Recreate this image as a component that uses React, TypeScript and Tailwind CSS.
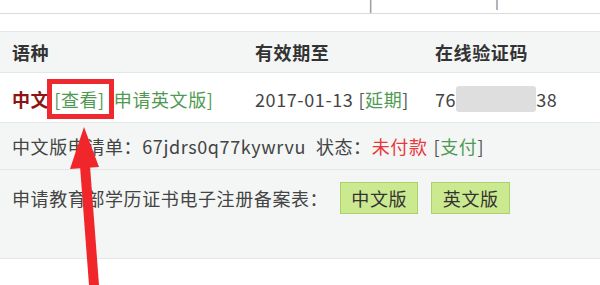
const font = { fontFamily: '"Noto Sans CJK SC", "Noto Sans", sans-serif' };

function Arrow() {
  return (
    <svg
      className="pointer-events-none absolute left-0 top-0"
      width="600"
      height="285"
      viewBox="0 0 600 285"
      aria-hidden="true"
    >
      <polygon points="84,127 70,169 99,167" fill="#f0262b" />
      <polygon points="80,166 90,166 99,285 89,285" fill="#f0262b" />
    </svg>
  );
}

export default function App() {
  return (
    <div
      className="relative h-[285px] w-[600px] overflow-hidden bg-white text-[18px] tracking-[0.6px] text-[#444]"
      style={font}
    >
      {/* bottom of the nav links from the row above */}
      <div className="h-[14px] overflow-hidden border-b border-[#d9dcdb]">
        <div className="-mt-[13px] pl-[252px] leading-[20px] text-[#888]">
          ······ | ······ | ······ | ······
        </div>
      </div>
      <div className="h-[17px]" />

      <div className="border-t border-[#e3e7e5]">
        <div className="flex h-[40px] items-center bg-[#f3f6f5] pl-3 font-bold text-[#333]">
          <span className="w-[243px]">语种</span>
          <span className="w-[180px]">有效期至</span>
          <span>在线验证码</span>
        </div>

        <div className="flex h-[50px] items-center border-t border-[#e3e7e5] bg-white pl-3 pt-[3px]">
          <div className="flex w-[243px] items-center">
            <span className="font-bold text-[#8b1414]">中文</span>
            <span className="relative -ml-[2px] flex h-[40px] items-center pl-[7px] pr-[9px]">
              <span className="absolute inset-0 border-[5px] border-[#ee2a2e]" />
              <span className="text-[#4f9a52]">[查看]</span>
            </span>
            <span className="text-[#4f9a52]">申请英文版]</span>
          </div>
          <div className="flex w-[180px] items-center">
            <span>2017-01-13</span>
            <span className="ml-[5px] text-[#555]">[</span>
            <span className="text-[#4f9a52]">延期</span>
            <span className="text-[#555]">]</span>
          </div>
          <div className="flex items-center">
            <span>76</span>
            <span className="h-[26px] w-[80px] rounded-[3px] bg-[#dedede]" />
            <span>38</span>
          </div>
        </div>

        <div className="flex h-[47px] items-center border-t border-[#e3e7e5] bg-[#f3f6f5] pl-3">
          <span>中文版申请单：67jdrs0q77kywrvu</span>
          <span className="ml-[10px]">状态：</span>
          <span className="text-[#e8383c]">未付款</span>
          <span className="ml-[6px] text-[#555]">[</span>
          <span className="text-[#4f9a52]">支付</span>
          <span className="text-[#555]">]</span>
        </div>

        <div className="h-[90px] border-y border-[#e3e7e5] bg-[#f3f6f5] pl-3 pt-[12px]">
          <div className="flex items-center">
            <span>申请教育部学历证书电子注册备案表：</span>
            <span className="ml-[12px] flex h-[32px] w-[78px] items-center justify-center border border-[#acd16a] bg-[#cbe98f] text-[#333]">
              中文版
            </span>
            <span className="ml-[13px] flex h-[32px] w-[79px] items-center justify-center border border-[#acd16a] bg-[#cbe98f] text-[#333]">
              英文版
            </span>
          </div>
        </div>
      </div>

      <Arrow />
    </div>
  );
}
